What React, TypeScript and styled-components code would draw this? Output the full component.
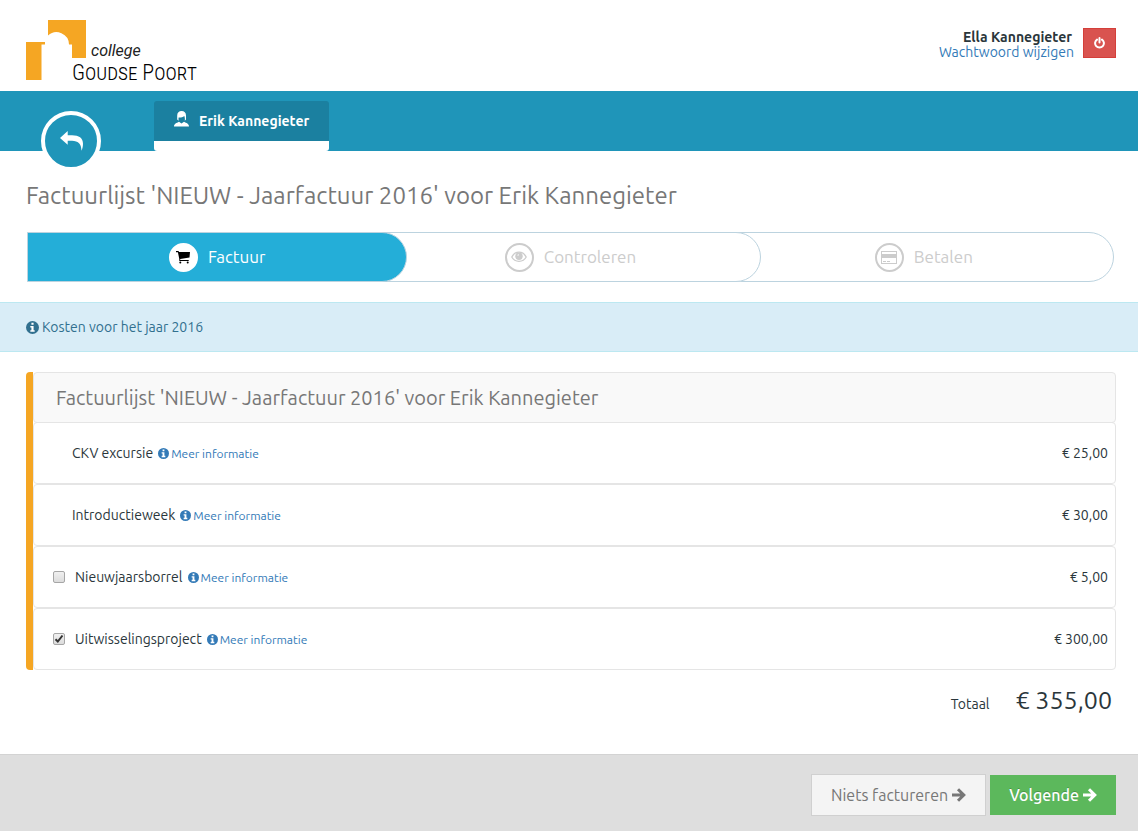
import React, { useState } from 'react';
import styled, { createGlobalStyle } from 'styled-components';

const GlobalStyle = createGlobalStyle`
  *, *::before, *::after { box-sizing: border-box; }
  body {
    margin: 0;
    background: #fff;
    color: #2a363b;
    font-family: Ubuntu, 'Noto Sans', 'Open Sans', sans-serif;
    font-size: 14px;
    line-height: 20px;
  }
  a { color: #337ab7; text-decoration: none; }
  button { font-family: inherit; cursor: pointer; }
  svg { display: block; flex: none; }
`;

const Page = styled.div`
  display: flex;
  flex-direction: column;
  min-height: 100vh;
`;

const Header = styled.header`
  display: flex;
  justify-content: space-between;
  align-items: flex-start;
  height: 91px;
  padding: 20px 22px 0 26px;
`;

const Account = styled.div`
  display: flex;
  gap: 9px;
  padding-top: 8px;
`;

const AccountText = styled.div`
  display: flex;
  flex-direction: column;
  align-items: flex-end;
  padding-top: 2px;
  line-height: 15px;
`;

const AccountName = styled.strong`
  padding-right: 2px;
  font-weight: 700;
`;

const LogoutButton = styled.button`
  display: flex;
  align-items: center;
  justify-content: center;
  width: 33px;
  height: 30px;
  padding: 0;
  border: 1px solid #d43f3a;
  background: #d9534f;
  color: #fff;
`;

const NavBar = styled.nav`
  display: flex;
  align-items: flex-start;
  gap: 53px;
  height: 60px;
  padding-left: 41px;
  background: #1f95b9;
`;

const BackButton = styled.button`
  display: flex;
  align-items: center;
  justify-content: center;
  width: 60px;
  height: 60px;
  margin-top: 20px;
  padding: 0;
  border: 4px solid #fff;
  border-radius: 50%;
  background: #1f95b9;
  color: #fff;
`;

const PersonTab = styled.a`
  display: flex;
  align-items: center;
  gap: 10px;
  height: 50px;
  margin-top: 10px;
  padding: 0 20px;
  border-bottom: 10px solid #fff;
  border-radius: 3px;
  background: #1b80a0;
  color: #fff;
  font-weight: 700;
`;

const Main = styled.main`
  flex: 1;
`;

const PageTitle = styled.h1`
  margin: 0;
  padding: 28px 22px 20px 26px;
  color: #777;
  font-size: 24px;
  font-weight: 400;
  line-height: 33px;
`;

const Stepper = styled.ol`
  display: flex;
  margin: 0 24px 20px 27px;
  padding: 0;
  list-style: none;
`;

const Step = styled.li<{ $active?: boolean; $level: number }>`
  position: relative;
  z-index: ${(p) => p.$level};
  display: flex;
  flex: 1 1 0;
  align-items: center;
  justify-content: center;
  gap: 10px;
  height: 50px;
  border: 1px solid #bcd3df;
  border-radius: 0 25px 25px 0;
  background: ${(p) => (p.$active ? '#24aed8' : '#fff')};
  color: ${(p) => (p.$active ? '#fff' : '#ccc')};
  font-size: 17px;

  & + & { margin-left: -27px; }
`;

const StepIcon = styled.span<{ $active?: boolean }>`
  display: flex;
  align-items: center;
  justify-content: center;
  width: 29px;
  height: 29px;
  border: 2px solid ${(p) => (p.$active ? '#fff' : '#ccc')};
  border-radius: 50%;
  background: #fff;
  color: ${(p) => (p.$active ? '#000' : '#ccc')};
`;

const Notice = styled.div`
  display: flex;
  align-items: center;
  gap: 3px;
  height: 50px;
  margin-bottom: 20px;
  padding: 0 26px;
  border: solid #bce8f1;
  border-width: 1px 0;
  background: #d9edf7;
  color: #31708f;
`;

const Invoice = styled.section`
  margin: 0 22px 0 26px;
  border-left: 7px solid #f5a623;
  border-radius: 4px;
`;

const InvoiceTitle = styled.h2`
  margin: 0;
  padding: 9px 22px;
  border: 1px solid #e5e5e5;
  border-radius: 4px;
  background: #f9f9f9;
  color: #777;
  font-size: 20px;
  font-weight: 400;
  line-height: 31px;
`;

const Lines = styled.ul`
  margin: -1px 0 0;
  padding: 0;
  list-style: none;
`;

const Line = styled.li<{ $optional: boolean }>`
  display: flex;
  align-items: center;
  height: 62px;
  padding: 0 7px 0 ${(p) => (p.$optional ? 19 : 38)}px;
  border: 1px solid #e5e5e5;
  border-radius: 4px;
`;

const CheckWrap = styled.span`
  position: relative;
  width: 12px;
  height: 12px;
  margin-right: 10px;
`;

const CheckBox = styled.input`
  display: block;
  appearance: none;
  width: 12px;
  height: 12px;
  margin: 0;
  border: 1px solid #a6a6a6;
  border-radius: 2px;
  background: linear-gradient(#f0f0f0, #dcdcdc);
`;

const CheckMark = styled.svg`
  position: absolute;
  inset: 0;
  pointer-events: none;
`;

const MoreLink = styled.a`
  display: flex;
  align-items: center;
  gap: 2px;
  margin-left: 5px;
  padding-top: 1px;
  font-size: 12px;
`;

const Amount = styled.span`
  margin-left: auto;
`;

const TotalRow = styled.div`
  display: flex;
  align-items: baseline;
  justify-content: flex-end;
  gap: 26px;
  padding: 12px 26px 36px;
`;

const TotalAmount = styled.strong`
  font-size: 25px;
  font-weight: 400;
  line-height: 36px;
`;

const Footer = styled.footer`
  display: flex;
  justify-content: flex-end;
  align-items: center;
  gap: 4px;
  padding: 19px 22px 15px;
  border-top: 1px solid #d3d3d3;
  background: #dedede;
`;

const ActionButton = styled.button<{ $primary?: boolean }>`
  display: flex;
  align-items: center;
  gap: 4px;
  height: ${(p) => (p.$primary ? 40 : 42)}px;
  padding: 0 19px;
  border: ${(p) => (p.$primary ? '0' : '1px solid #d0d0d0')};
  background: ${(p) => (p.$primary ? '#5cb85c' : '#f4f4f4')};
  color: ${(p) => (p.$primary ? '#fff' : '#777')};
  font-size: 16px;
  font-weight: ${(p) => (p.$primary ? 500 : 400)};
  text-shadow: ${(p) => (p.$primary ? '0 -1px 0 rgba(0, 0, 0, 0.2)' : 'none')};
`;

const Logo = () => (
  <svg width="180" height="64" viewBox="0 0 180 64" role="img" aria-label="College Goudse Poort">
    <path
      fill="#f5a623"
      d="M22 0H60V38H46V24.500H43A12.500 12.500 0 0 0 22 15.500ZM0 22H19V24.500H15.500V60H0Z"
    />
    <text x="65" y="36" fontFamily="Roboto, sans-serif" fontSize="16" fontStyle="italic" fontWeight="400" fill="#222">
      college
    </text>
    <text
      x="46"
      y="60"
      fontFamily="'Ubuntu Condensed', 'Roboto Condensed', 'Open Sans Condensed', Roboto, sans-serif"
      fontSize="22"
      fontWeight="300"
      fill="#000"
      style={{ fontVariant: 'small-caps' }}
    >
      Goudse Poort
    </text>
  </svg>
);

const PowerIcon = () => (
  <svg width="11" height="12" viewBox="0 0 11 12" fill="none" stroke="currentColor" strokeWidth="2" strokeLinecap="round">
    <path d="M3 2.6A4.4 4.4 0 1 0 8 2.6M5.5 1V5.5" />
  </svg>
);

const BackIcon = () => (
  <svg width="23" height="20" viewBox="0 0 23 20" fill="currentColor">
    <path d="M0 7L7.700 0V4.300H12C19 4.300 23 7 23 12.700C23 15 22.500 17.500 21.500 19.700C21.300 16.500 20.700 14 19.500 12.700C17.500 10.500 15 9.700 12 9.700H7.700V13.700Z" />
  </svg>
);

const PersonIcon = () => (
  <svg width="15" height="20" viewBox="0 0 15 20" fill="currentColor">
    <path d="M3.200 8.500V4.500C3.200 1.500 5 0 7.600 0C10.300 0 12 1.500 12 4.500V8.500L10.800 9.800C11 8 10.900 6.500 10.300 5C8.800 6.200 6.500 6.700 4.600 6.500C4.400 7.500 4.500 8.700 4.700 9.800ZM0 15.500C0 13 2.500 12 5 10.800L7.500 12.500L10 10.800C12.500 12 15 13 15 15.500Z" />
  </svg>
);

const CartIcon = () => (
  <svg width="14" height="13" viewBox="0 0 14 13" fill="currentColor">
    <path d="M0 0H2.500L3 1H14L13.500 6.500L4.200 8V9H12.700V10H3.300V8L1.900 1.200H0Z" />
    <rect x="3.300" y="10.500" width="2" height="2" rx="1" />
    <rect x="10.700" y="10.500" width="2" height="2" rx="1" />
  </svg>
);

const EyeIcon = () => (
  <svg width="16" height="12" viewBox="0 0 16 12" fill="none" stroke="currentColor">
    <path strokeWidth="1.300" d="M.800 6C2.500 2.800 5 1.200 8 1.200S13.500 2.800 15.200 6C13.500 9.200 11 10.300 8 10.300S2.500 9.200 .800 6Z" />
    <circle cx="8" cy="5.300" r="3.700" fill="currentColor" stroke="none" />
    <path stroke="#fff" strokeWidth="1" d="M6.500 4.200L8 3.800" />
  </svg>
);

const CardIcon = () => (
  <svg width="16" height="13" viewBox="0 0 16 13" fill="none" stroke="currentColor">
    <rect x=".5" y=".5" width="15" height="12" />
    <path strokeWidth="4" d="M1 5H15" />
    <path strokeWidth="1" d="M2 10.500H5M6 10.500H9" />
  </svg>
);

const InfoIcon = ({ size }: { size: number }) => (
  <svg width={size} height={size} viewBox="0 0 12 12">
    <circle cx="6" cy="6" r="6" fill="currentColor" />
    <path fill="#fff" d="M5 1.700H7V3.500H5ZM4 4.500H7V8.500H8V10H4V8.500H5V6H4Z" />
  </svg>
);

const ArrowIcon = () => (
  <svg width="14" height="14" viewBox="0 0 14 14" fill="none" stroke="currentColor" strokeWidth="3">
    <path d="M0 7H11.500M6 1.200L11.800 7L6 12.800" />
  </svg>
);

type InvoiceLine = { id: string; name: string; price: number; optional?: boolean };

const invoiceLines: InvoiceLine[] = [
  { id: 'ckv', name: 'CKV excursie', price: 25 },
  { id: 'intro', name: 'Introductieweek', price: 30 },
  { id: 'borrel', name: 'Nieuwjaarsborrel', price: 5, optional: true },
  { id: 'uitwisseling', name: 'Uitwisselingsproject', price: 300, optional: true },
];

const euro = (value: number) => `€ ${value.toFixed(2).replace('.', ',')}`;

export default function App() {
  const [chosen, setChosen] = useState<string[]>(['uitwisseling']);
  const toggle = (id: string) =>
    setChosen((list) => (list.includes(id) ? list.filter((x) => x !== id) : [...list, id]));
  const total = invoiceLines
    .filter((line) => !line.optional || chosen.includes(line.id))
    .reduce((sum, line) => sum + line.price, 0);
  const title = "Factuurlijst 'NIEUW - Jaarfactuur 2016' voor Erik Kannegieter";

  return (
    <Page>
      <GlobalStyle />
      <Header>
        <Logo />
        <Account>
          <AccountText>
            <AccountName>Ella Kannegieter</AccountName>
            <a href="#wachtwoord">Wachtwoord wijzigen</a>
          </AccountText>
          <LogoutButton type="button" aria-label="Uitloggen">
            <PowerIcon />
          </LogoutButton>
        </Account>
      </Header>
      <NavBar>
        <BackButton type="button" aria-label="Terug">
          <BackIcon />
        </BackButton>
        <PersonTab href="#erik">
          <PersonIcon />
          Erik Kannegieter
        </PersonTab>
      </NavBar>
      <Main>
        <PageTitle>{title}</PageTitle>
        <Stepper>
          <Step $active $level={3} aria-current="step">
            <StepIcon $active><CartIcon /></StepIcon>
            Factuur
          </Step>
          <Step $level={2}>
            <StepIcon><EyeIcon /></StepIcon>
            Controleren
          </Step>
          <Step $level={1}>
            <StepIcon><CardIcon /></StepIcon>
            Betalen
          </Step>
        </Stepper>
        <Notice>
          <InfoIcon size={13} />
          Kosten voor het jaar 2016
        </Notice>
        <Invoice>
          <InvoiceTitle>{title}</InvoiceTitle>
          <Lines>
            {invoiceLines.map((line) => (
              <Line key={line.id} $optional={!!line.optional}>
                {line.optional ? (
                  <>
                    <CheckWrap>
                      <CheckBox
                        type="checkbox"
                        id={line.id}
                        checked={chosen.includes(line.id)}
                        onChange={() => toggle(line.id)}
                      />
                      {chosen.includes(line.id) && (
                        <CheckMark width="12" height="12" viewBox="0 0 12 12" fill="none" stroke="#333" strokeWidth="2">
                          <path d="M2.500 6.200L4.800 8.500L9.500 2.500" />
                        </CheckMark>
                      )}
                    </CheckWrap>
                    <label htmlFor={line.id}>{line.name}</label>
                  </>
                ) : (
                  <span>{line.name}</span>
                )}
                <MoreLink href={`#info-${line.id}`}>
                  <InfoIcon size={11} />
                  Meer informatie
                </MoreLink>
                <Amount>{euro(line.price)}</Amount>
              </Line>
            ))}
          </Lines>
        </Invoice>
        <TotalRow>
          <span>Totaal</span>
          <TotalAmount>{euro(total)}</TotalAmount>
        </TotalRow>
      </Main>
      <Footer>
        <ActionButton type="button">
          Niets factureren
          <ArrowIcon />
        </ActionButton>
        <ActionButton type="button" $primary>
          Volgende
          <ArrowIcon />
        </ActionButton>
      </Footer>
    </Page>
  );
}
